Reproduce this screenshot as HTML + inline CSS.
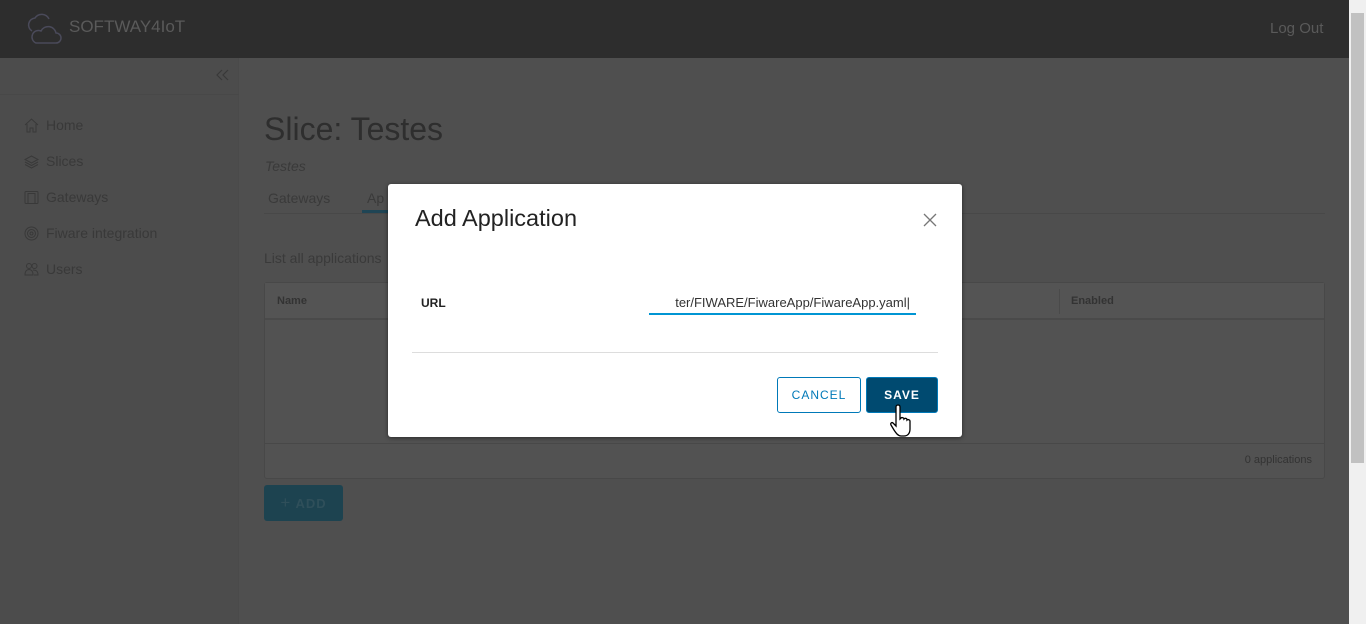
<!DOCTYPE html>
<html><head><style>
*{margin:0;padding:0;box-sizing:border-box}
body{width:1366px;height:624px;overflow:hidden;background:#4f4f4f;font-family:"Liberation Sans",sans-serif;position:relative}
.hdr{position:absolute;left:0;top:0;width:1349px;height:58px;background:#2d2d2d}
.logo{position:absolute;left:69px;top:17px;color:#5a5a5a;font-size:17px}
.logout{position:absolute;left:1270px;top:20px;color:#5a5a5a;font-size:15px}
.side{position:absolute;left:0;top:58px;width:239px;height:566px;background:#4c4c4c;border-right:1px solid #4a4a4a}
.side .sep{position:absolute;left:0;top:36px;width:239px;border-top:1px solid #484848}
.nav{position:absolute;left:46px;color:#393939;font-size:14px}
.ic{position:absolute;left:24px}
.main{position:absolute;left:240px;top:58px;width:1109px;height:566px}
.sb{position:absolute;left:1349px;top:0;width:17px;height:624px;background:#f0f0f0}
.thumb{position:absolute;left:2px;top:13px;width:13px;height:450px;background:#c1c1c1}
.modal{position:absolute;left:388px;top:184px;width:574px;height:253px;background:#fff;border-radius:3px;box-shadow:0 1px 4px rgba(0,0,0,.5)}
</style></head><body>
<div class="hdr">
<svg style="position:absolute;left:24px;top:11px" width="38" height="34" viewBox="0 0 38 34" fill="none" stroke="#4a4a5a" stroke-width="1.5"><path d="M8 20a7 7 0 0 1 3-13 8 8 0 0 1 14 1"/><path d="M12 32h20a5 5 0 0 0 0-10 8 8 0 0 0-15-2 6 6 0 0 0-5 12z"/></svg>
<div class="logo">SOFTWAY4IoT</div>
<div class="logout">Log Out</div>
</div>
<div class="side">
<svg style="position:absolute;left:216px;top:11px" width="14" height="12" viewBox="0 0 14 12" fill="none" stroke="#393939" stroke-width="1.2"><path d="M6 1L1 6l5 5M12 1L7 6l5 5"/></svg>
<div class="sep"></div>
<svg class="ic" style="top:60px" width="15" height="15" viewBox="0 0 15 15" fill="none" stroke="#393939"><path d="M1 7L7.5 1 14 7M3 6v8h3v-4h3v4h3V6"/></svg><div class="nav" style="top:59px">Home</div>
<svg class="ic" style="top:96px" width="15" height="15" viewBox="0 0 15 15" fill="none" stroke="#393939"><path d="M7.5 2L14 5.5 7.5 9 1 5.5z M1 8l6.5 3.5L14 8M1 10.5l6.5 3.5 6.5-3.5"/></svg><div class="nav" style="top:95px">Slices</div>
<svg class="ic" style="top:132px" width="15" height="15" viewBox="0 0 15 15" fill="none" stroke="#393939"><rect x="1" y="1.5" width="13" height="12" rx="1"/><rect x="4" y="3.5" width="7" height="10"/></svg><div class="nav" style="top:131px">Gateways</div>
<svg class="ic" style="top:168px" width="15" height="15" viewBox="0 0 15 15" fill="none" stroke="#393939"><circle cx="7.5" cy="7.5" r="6.5"/><circle cx="7.5" cy="7.5" r="4"/><circle cx="7.5" cy="7.5" r="1.5"/></svg><div class="nav" style="top:167px">Fiware integration</div>
<svg class="ic" style="top:204px" width="15" height="15" viewBox="0 0 15 15" fill="none" stroke="#393939"><circle cx="5" cy="4" r="2.5"/><circle cx="10.5" cy="4" r="2.5"/><path d="M1 13c0-4 2-5.5 4-5.5s4 1.5 4 5.5zM9 8c3 0 5 1 5 5h-4"/></svg><div class="nav" style="top:203px">Users</div>
</div>
<div class="main">
<div style="position:absolute;left:24px;top:53px;font-size:32px;color:#2e2e2e">Slice: Testes</div>
<div style="position:absolute;left:25px;top:100px;font-size:14px;color:#3a3a3a;font-style:italic">Testes</div>
<div style="position:absolute;left:28px;top:132px;font-size:14px;color:#3a3a3a">Gateways</div>
<div style="position:absolute;left:127px;top:132px;font-size:14px;color:#3a3a3a">Ap</div>
<div style="position:absolute;left:122px;top:152px;width:30px;height:3px;background:#1f4555"></div>
<div style="position:absolute;left:24px;top:155px;width:1061px;border-top:1px solid #484848"></div>
<div style="position:absolute;left:24px;top:192px;font-size:14px;color:#3a3a3a">List all applications</div>
<div style="position:absolute;left:24px;top:224px;width:1061px;height:197px;border:1px solid #484848;border-radius:3px;background:#525252">
<div style="height:37px;border-bottom:2px solid #4a4a4a;background:#545454"></div>
<div style="position:absolute;left:12px;top:12px;font-size:11px;color:#333;font-weight:bold">Name</div>
<div style="position:absolute;left:794px;top:6px;height:25px;border-left:1px solid #4a4a4a"></div>
<div style="position:absolute;left:806px;top:12px;font-size:11px;color:#333;font-weight:bold">Enabled</div>
<div style="position:absolute;left:0;top:160px;width:100%;border-top:1px solid #484848"></div>
<div style="position:absolute;right:12px;top:171px;font-size:11px;color:#333">0 applications</div>
</div>
<div style="position:absolute;left:24px;top:427px;width:79px;height:36px;background:#1d4350;border-radius:3px;color:#2f4f5a;font-size:13px;font-weight:bold;letter-spacing:1px;line-height:36px;text-align:center"><span style="font-weight:normal;font-size:17px">+</span> ADD</div>
</div>
<div class="modal">
<div style="position:absolute;left:27px;top:21px;font-size:23.5px;color:#222">Add Application</div>
<svg style="position:absolute;left:535px;top:29px" width="14" height="14" viewBox="0 0 14 14" stroke="#777" stroke-width="1.3"><path d="M1 1l12 12M13 1L1 13"/></svg>
<div style="position:absolute;left:33px;top:112px;font-size:12px;color:#222;font-weight:bold">URL</div>
<div style="position:absolute;left:261px;top:111px;width:267px;height:20px;border-bottom:2px solid #0095d3;font-size:13px;color:#333;text-align:right;padding-right:6px;white-space:nowrap;overflow:hidden">ter/FIWARE/FiwareApp/FiwareApp.yaml|</div>
<div style="position:absolute;left:24px;top:168px;width:526px;border-top:1px solid #ddd"></div>
<div style="position:absolute;left:389px;top:193px;width:84px;height:36px;border:1px solid #0079b8;border-radius:3px;color:#0079b8;font-size:12px;letter-spacing:1px;text-align:center;line-height:34px">CANCEL</div>
<div style="position:absolute;left:478px;top:193px;width:72px;height:36px;background:#004a70;border:1px solid #0079b8;border-radius:3px;color:#fff;font-size:12px;font-weight:bold;letter-spacing:1px;text-align:center;line-height:34px">SAVE</div>
</div>
<svg style="position:absolute;left:890px;top:403px" width="30" height="36" viewBox="0 0 30 36"><path d="M8 2c1.5 0 2 1 2 2v12l1-1c1-1 3 0 3 1 1-1 3-1 3 1 1-1 3 0 3 1v8c0 4-2 7-6 7h-3c-3 0-5-3-7-6l-3-5c-1-2 1-3 2-2l3 3V4c0-1 .5-2 2-2z" fill="#fff" stroke="#000" stroke-width="1.3"/></svg>
<div class="sb"><div class="thumb"></div></div>
</body></html>
